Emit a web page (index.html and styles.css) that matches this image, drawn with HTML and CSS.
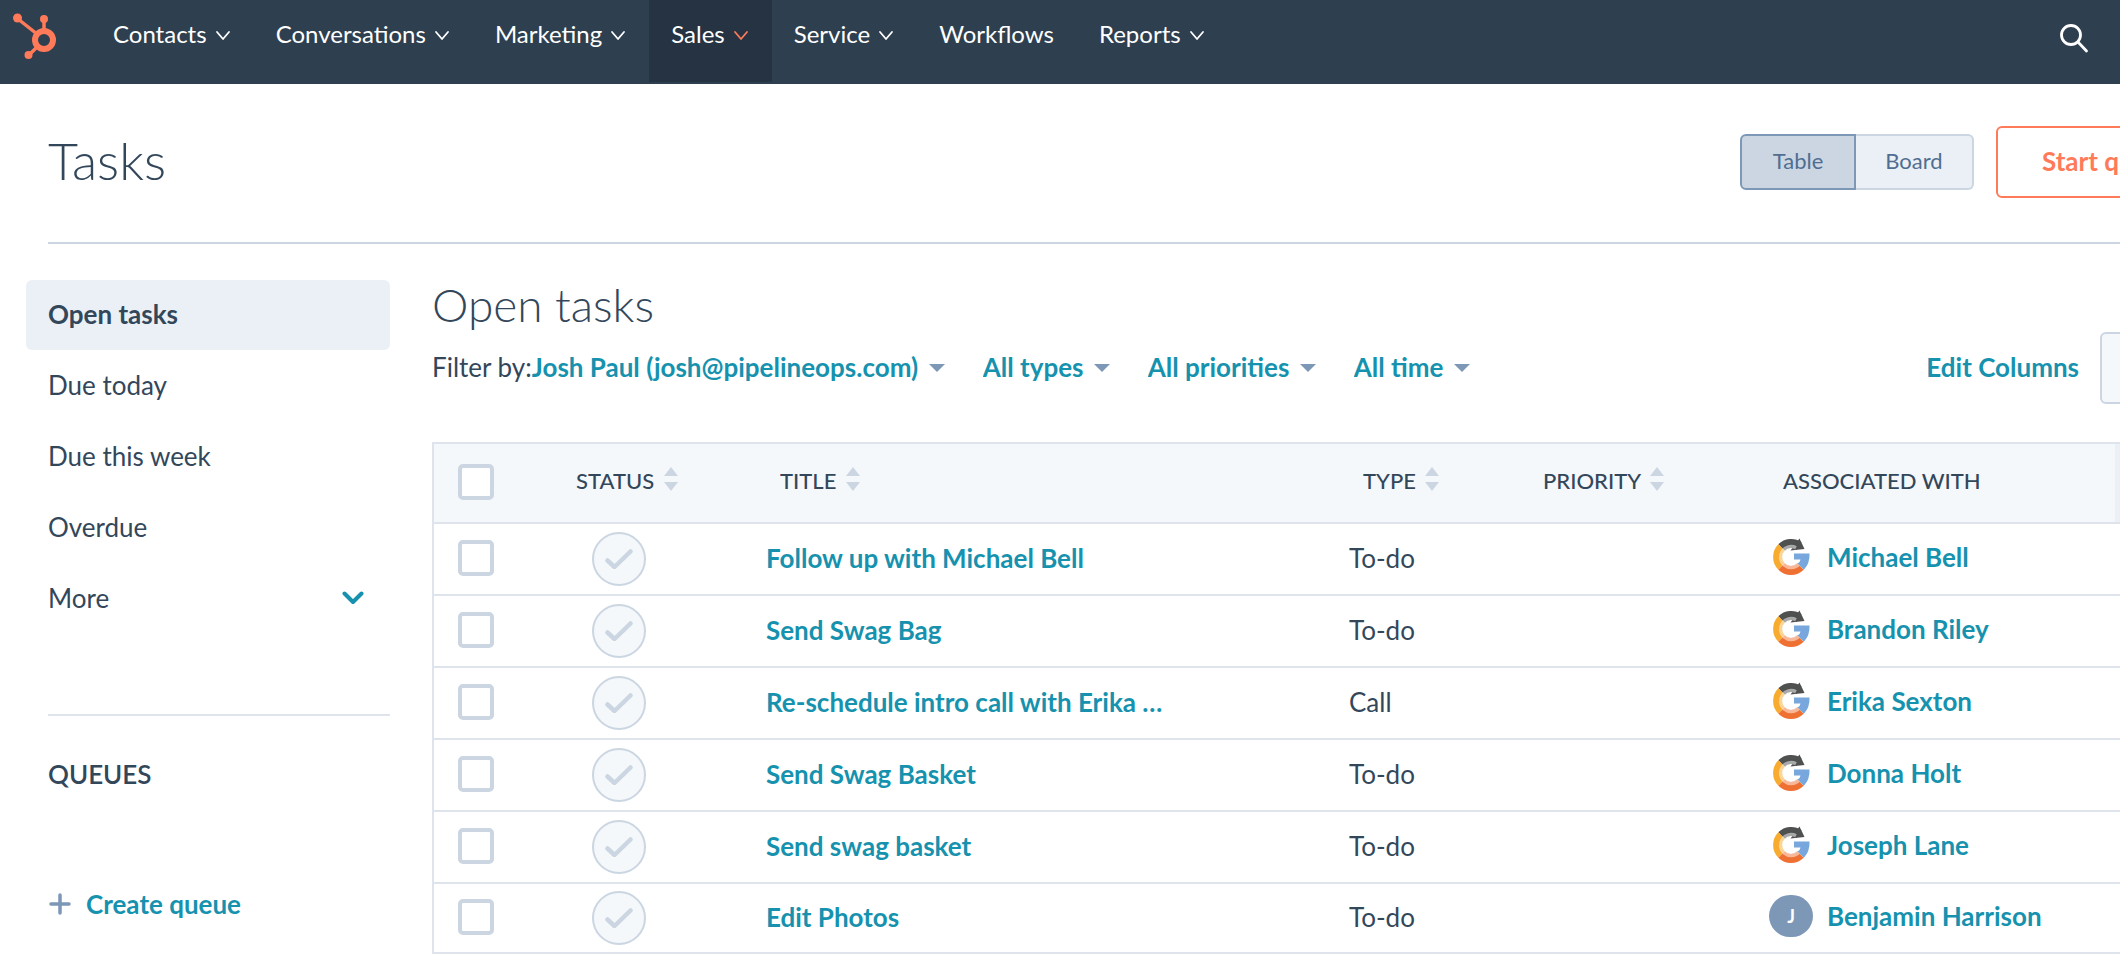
FILE: index.html
```html
<!DOCTYPE html>
<html lang="en">
  <head>
    <meta charset="utf-8">
    <title>Tasks</title>
    <link rel="stylesheet" href="styles.css">
  </head>
  <body>
    <svg class="defs" aria-hidden="true">
      <symbol id="chevron" viewBox="0 0 16 12"><path d="M2 2l6 7 6-7" fill="none" stroke="currentColor" stroke-width="1.800" stroke-linecap="round" stroke-linejoin="round"/></symbol>
      <symbol id="caret" viewBox="0 0 16 8"><path d="M0 0h16l-8 8z" fill="currentColor"/></symbol>
      <symbol id="sort" viewBox="0 0 14 24"><path d="M7 0l7 9H0zM0 15h14l-7 9z" fill="currentColor"/></symbol>
      <symbol id="check" viewBox="0 0 28 20"><path d="M2.500 11.500l7 6.500 16-15.500" fill="none" stroke="currentColor" stroke-width="4.500" stroke-linecap="round" stroke-linejoin="round"/></symbol>
      <symbol id="g-logo" viewBox="0 0 38 38">
        <g fill="none" stroke-width="9">
          <path d="M9.500 9.500A13.500 13.500 0 0 1 27 8" stroke="#4f5150"/>
          <path d="M9.500 28.500A13.500 13.500 0 0 1 9.500 9.500" stroke="#f9ab30"/>
          <path d="M28.500 28.500A13.500 13.500 0 0 1 9.500 28.500" stroke="#ee7033"/>
        </g>
        <path d="M27.500 0.500l5 10.500-14 1.500 6-8z" fill="#4f5150"/>
        <path d="M22 15.500h15.500q.5 10-5.700 16.300l-6.300-6.300q3-2 3-4H22z" fill="#77a7dc"/>
        <path d="M26.500 26.500A10.500 10.500 0 1 1 24 9.700" fill="none" stroke="#fff" stroke-opacity=".5" stroke-width="3.500"/>
      </symbol>
    </svg>

    <nav class="navbar">
      <a class="logo" href="#" aria-label="Home">
        <svg width="44" height="48" viewBox="0 0 44 48" fill="none" stroke="#ff7a59">
          <circle cx="31" cy="27" r="9" stroke-width="6"/>
          <path d="M5 6l19 15M31 7v11M24 34l-8 8" stroke-width="3.500"/>
          <g fill="#ff7a59" stroke="none"><circle cx="4.500" cy="5" r="4.500"/><circle cx="31" cy="6" r="4"/><circle cx="15.500" cy="42" r="4"/></g>
        </svg>
      </a>
      <a class="nav-item" href="#">Contacts <svg class="chevron"><use href="#chevron"/></svg></a>
      <a class="nav-item" href="#">Conversations <svg class="chevron"><use href="#chevron"/></svg></a>
      <a class="nav-item" href="#">Marketing <svg class="chevron"><use href="#chevron"/></svg></a>
      <a class="nav-item active" href="#">Sales <svg class="chevron"><use href="#chevron"/></svg></a>
      <a class="nav-item" href="#">Service <svg class="chevron"><use href="#chevron"/></svg></a>
      <a class="nav-item" href="#">Workflows</a>
      <a class="nav-item" href="#">Reports <svg class="chevron"><use href="#chevron"/></svg></a>
      <button class="nav-search" aria-label="Search">
        <svg width="30" height="30" viewBox="0 0 30 30" fill="none" stroke="#fff" stroke-width="2.800" stroke-linecap="round"><circle cx="12" cy="12" r="9.500"/><path d="M19 19l8.500 9"/></svg>
      </button>
    </nav>

    <div class="page">
      <header class="page-header">
        <h1>Tasks</h1>
        <div class="toggle">
          <button class="selected">Table</button>
          <button>Board</button>
        </div>
        <button class="start-btn">Start queue</button>
      </header>

      <div class="content">
        <aside class="sidebar">
          <a class="side-item active" href="#">Open tasks</a>
          <a class="side-item" href="#">Due today</a>
          <a class="side-item" href="#">Due this week</a>
          <a class="side-item" href="#">Overdue</a>
          <button class="side-item">More
            <svg width="22" height="14" viewBox="0 0 22 14" fill="none" stroke="#1692ae" stroke-width="4" stroke-linecap="round" stroke-linejoin="round"><path d="M2.500 2.500l8.500 8.500 8.500-8.500"/></svg>
          </button>
          <div class="queues">
            <h3>QUEUES</h3>
            <button class="create-queue">
              <svg width="22" height="22" viewBox="0 0 22 22" stroke="#7c98b6" stroke-width="3.500" stroke-linecap="round"><path d="M11 2v18M2 11h18"/></svg>
              Create queue
            </button>
          </div>
        </aside>

        <main class="main">
          <h2>Open tasks</h2>
          <div class="filters">
            <span>Filter by:</span>
            <label class="filter"><select aria-label="Owner"><option>Josh Paul (josh@pipelineops.com)</option></select><svg class="caret"><use href="#caret"/></svg></label>
            <label class="filter"><select aria-label="Type"><option>All types</option></select><svg class="caret"><use href="#caret"/></svg></label>
            <label class="filter"><select aria-label="Priority"><option>All priorities</option></select><svg class="caret"><use href="#caret"/></svg></label>
            <label class="filter"><select aria-label="Due date"><option>All time</option></select><svg class="caret"><use href="#caret"/></svg></label>
            <a class="edit-columns" href="#">Edit Columns</a>
            <button class="save-btn" aria-label="Save view"></button>
          </div>

          <table class="tasks">
            <colgroup>
              <col class="col-check"><col class="col-status"><col><col class="col-type"><col class="col-priority"><col class="col-contact"><col class="col-end">
            </colgroup>
            <thead>
              <tr>
                <th class="check-cell"><input type="checkbox" aria-label="Select all"></th>
                <th>STATUS <svg class="sort"><use href="#sort"/></svg></th>
                <th>TITLE <svg class="sort"><use href="#sort"/></svg></th>
                <th>TYPE <svg class="sort"><use href="#sort"/></svg></th>
                <th>PRIORITY <svg class="sort"><use href="#sort"/></svg></th>
                <th>ASSOCIATED WITH</th>
                <th class="end-cell"></th>
              </tr>
            </thead>
            <tbody>
              <tr>
                <td class="check-cell"><input type="checkbox" aria-label="Select task"></td>
                <td class="status-cell"><button class="status" aria-label="Complete"><svg width="28" height="20"><use href="#check"/></svg></button></td>
                <td><a href="#">Follow up with Michael Bell</a></td>
                <td>To-do</td>
                <td></td>
                <td class="contact-cell"><div class="contact"><svg class="avatar"><use href="#g-logo"/></svg><a href="#">Michael Bell</a></div></td>
                <td></td>
              </tr>
              <tr>
                <td class="check-cell"><input type="checkbox" aria-label="Select task"></td>
                <td class="status-cell"><button class="status" aria-label="Complete"><svg width="28" height="20"><use href="#check"/></svg></button></td>
                <td><a href="#">Send Swag Bag</a></td>
                <td>To-do</td>
                <td></td>
                <td class="contact-cell"><div class="contact"><svg class="avatar"><use href="#g-logo"/></svg><a href="#">Brandon Riley</a></div></td>
                <td></td>
              </tr>
              <tr>
                <td class="check-cell"><input type="checkbox" aria-label="Select task"></td>
                <td class="status-cell"><button class="status" aria-label="Complete"><svg width="28" height="20"><use href="#check"/></svg></button></td>
                <td><a href="#">Re-schedule intro call with Erika …</a></td>
                <td>Call</td>
                <td></td>
                <td class="contact-cell"><div class="contact"><svg class="avatar"><use href="#g-logo"/></svg><a href="#">Erika Sexton</a></div></td>
                <td></td>
              </tr>
              <tr>
                <td class="check-cell"><input type="checkbox" aria-label="Select task"></td>
                <td class="status-cell"><button class="status" aria-label="Complete"><svg width="28" height="20"><use href="#check"/></svg></button></td>
                <td><a href="#">Send Swag Basket</a></td>
                <td>To-do</td>
                <td></td>
                <td class="contact-cell"><div class="contact"><svg class="avatar"><use href="#g-logo"/></svg><a href="#">Donna Holt</a></div></td>
                <td></td>
              </tr>
              <tr>
                <td class="check-cell"><input type="checkbox" aria-label="Select task"></td>
                <td class="status-cell"><button class="status" aria-label="Complete"><svg width="28" height="20"><use href="#check"/></svg></button></td>
                <td><a href="#">Send swag basket</a></td>
                <td>To-do</td>
                <td></td>
                <td class="contact-cell"><div class="contact"><svg class="avatar"><use href="#g-logo"/></svg><a href="#">Joseph Lane</a></div></td>
                <td></td>
              </tr>
              <tr>
                <td class="check-cell"><input type="checkbox" aria-label="Select task"></td>
                <td class="status-cell"><button class="status" aria-label="Complete"><svg width="28" height="20"><use href="#check"/></svg></button></td>
                <td><a href="#">Edit Photos</a></td>
                <td>To-do</td>
                <td></td>
                <td class="contact-cell"><div class="contact"><span class="initial">J</span><a href="#">Benjamin Harrison</a></div></td>
                <td></td>
              </tr>
            </tbody>
          </table>
        </main>
      </div>
    </div>
  </body>
</html>
```
FILE: styles.css
```css
* {
  box-sizing: border-box;
}

body {
  margin: 0;
  font-family: Lato, "Open Sans", sans-serif;
  font-size: 26px;
  line-height: 32px;
  color: #33475b;
  background: #fff;
  overflow-x: hidden;
}

a {
  color: #1692ae;
  font-weight: 700;
  text-decoration: none;
}

button,
select {
  font: inherit;
  color: inherit;
  background: none;
  border: none;
  padding: 0;
  cursor: pointer;
}

.defs {
  display: none;
}

/* top navigation */
.navbar {
  display: flex;
  align-items: flex-start;
  height: 84px;
  background: #2e3f50;
}

.logo {
  padding: 13px 34px 0 13px;
  line-height: 0;
}

.nav-item {
  display: flex;
  gap: 8px;
  height: 82px;
  padding: 18px 23px 18px 22px;
  font-size: 24px;
  font-weight: 400;
  color: #fff;
}

.nav-item.active {
  background: #253342;
}

.chevron {
  width: 16px;
  height: 12px;
  margin-top: 12px;
}

.active .chevron {
  color: #ff7a59;
}

.nav-search {
  margin-left: auto;
  padding: 23px 31px 0 0;
  line-height: 0;
}

/* page header */
.page {
  margin-right: -92px;
  padding-left: 48px;
}

.page-header {
  display: flex;
  align-items: center;
  height: 160px;
  padding-bottom: 2px;
  border-bottom: 2px solid #cbd6e2;
}

h1,
h2,
h3 {
  margin: 0;
}

h1 {
  padding-bottom: 4px;
  font-size: 52px;
  font-weight: 300;
  line-height: 60px;
}

.toggle {
  display: flex;
  margin-left: auto;
  margin-right: 22px;
}

.toggle button {
  width: 118px;
  height: 56px;
  padding-bottom: 2px;
  font-size: 22px;
  color: #506e91;
  background: #eaf0f6;
  border: 2px solid #cbd6e2;
  border-left: none;
  border-radius: 0 6px 6px 0;
}

.toggle .selected {
  width: 116px;
  background: #cbd6e2;
  border: 2px solid #7c98b6;
  border-radius: 6px 0 0 6px;
}

.start-btn {
  width: 216px;
  height: 72px;
  padding: 0 0 2px 44px;
  text-align: left;
  font-weight: 700;
  color: #ff7a59;
  border: 2px solid #ff7a59;
  border-radius: 6px;
}

.content {
  display: flex;
  gap: 42px;
}

/* sidebar */
.sidebar {
  flex: none;
  width: 364px;
  margin-left: -22px;
  padding-top: 36px;
}

.side-item {
  display: flex;
  align-items: center;
  justify-content: space-between;
  width: 100%;
  height: 71px;
  padding: 0 26px 2px 22px;
  font-weight: 400;
  color: #33475b;
}

.side-item.active {
  height: 70px;
  font-weight: 700;
  background: #eaf0f6;
  border-radius: 6px;
}

.queues {
  margin: 80px 0 0 22px;
  padding-top: 42px;
  border-top: 2px solid #dfe3eb;
}

h3 {
  font-size: 26px;
  font-weight: 600;
}

.create-queue {
  display: flex;
  align-items: center;
  gap: 15px;
  margin-top: 98px;
  padding-left: 1px;
  font-weight: 700;
  color: #1692ae;
}

/* task list */
.main {
  flex: 1;
  min-width: 0;
  padding-top: 34px;
}

h2 {
  font-size: 46px;
  font-weight: 300;
  line-height: 54px;
}

.filters {
  display: flex;
  align-items: center;
  height: 72px;
  margin-bottom: 38px;
}

.filter {
  display: flex;
  align-items: center;
  gap: 10px;
  margin-right: 38px;
}

.filters span,
.filters a,
.filter select {
  padding-bottom: 2px;
}

.filter select {
  appearance: none;
  font-weight: 700;
  color: #1692ae;
}

.caret {
  width: 16px;
  height: 8px;
  color: #7c98b6;
}

.edit-columns {
  margin-left: auto;
  margin-right: 21px;
}

.save-btn {
  width: 112px;
  height: 72px;
  background: #f5f8fa;
  border: 2px solid #cbd6e2;
  border-radius: 6px;
}

.tasks {
  width: 100%;
  table-layout: fixed;
  border-collapse: separate;
  border-spacing: 0;
  border: 2px solid #dfe3eb;
  border-bottom: none;
}

.col-check { width: 112px; }
.col-status { width: 204px; }
.col-type { width: 180px; }
.col-priority { width: 240px; }
.col-contact { width: 362px; }
.col-end { width: 95px; }

th,
td {
  border-bottom: 2px solid #dfe3eb;
  text-align: left;
}

th {
  height: 80px;
  padding: 0 0 4px 30px;
  font-size: 22px;
  font-weight: 500;
  background: #f5f8fa;
}

td {
  height: 72px;
  padding: 0 16px 2px;
}

tbody tr:last-child td {
  height: 70px;
}

.check-cell {
  padding: 0 0 2px 24px;
}

.status-cell {
  padding: 0 0 0 46px;
}

.contact-cell {
  padding-bottom: 4px;
}

.end-cell {
  background: #eaf0f6;
}

.sort {
  width: 14px;
  height: 24px;
  margin-left: 4px;
  vertical-align: -2px;
  color: #cbd6e2;
}

input[type="checkbox"] {
  display: block;
  appearance: none;
  width: 36px;
  height: 36px;
  margin: 0;
  background: #fff;
  border: 4px solid #cbd6e2;
  border-radius: 5px;
}

.status {
  display: flex;
  align-items: center;
  justify-content: center;
  width: 54px;
  height: 54px;
  color: #cbd6e2;
  background: #f5f8fa;
  border: 2px solid #cbd6e2;
  border-radius: 50%;
}

.contact {
  display: flex;
  align-items: center;
  gap: 14px;
}

.avatar,
.initial {
  width: 44px;
  height: 38px;
}

.initial {
  height: 42px;
  border-radius: 21px;
  font-size: 18px;
  font-weight: 700;
  line-height: 42px;
  text-align: center;
  color: #fff;
  background: #7c98b6;
}
```
